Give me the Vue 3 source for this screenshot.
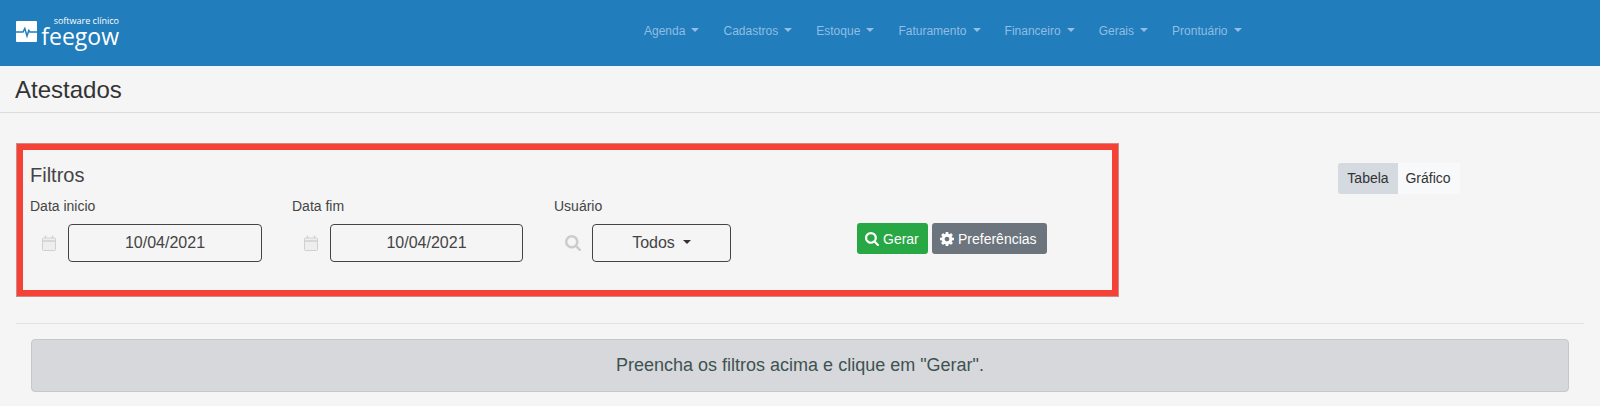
<script setup>
const menu = ["Agenda", "Cadastros", "Estoque", "Faturamento", "Financeiro", "Gerais", "Prontuário"];
</script>

<template>
  <div class="page">
    <header class="topbar">
      <a class="brand">
        <svg class="brand-icon" viewBox="0 0 21 21" width="21" height="21">
          <rect width="21" height="21" rx="1" fill="#fff" />
          <path d="M0 11h7l1.8-3.5 2.2 7.5 1.8-5.5 1 1.5H21" fill="none" stroke="#217dbb" stroke-width="1.5" />
        </svg>
        <span class="brand-text">
          <small>software clínico</small>
          <b>feegow</b>
        </span>
      </a>
      <nav class="menu">
        <a v-for="item in menu" :key="item" class="menu-link">{{ item }}<i class="caret"></i></a>
      </nav>
    </header>

    <div class="page-title">
      <h1>Atestados</h1>
    </div>

    <section class="filter-row">
      <form class="filters">
        <h2>Filtros</h2>
        <div class="fields">
          <div class="field">
            <label>Data inicio</label>
            <div class="control">
              <span class="addon">
                <svg viewBox="0 0 14 16" width="14" height="16">
                  <path d="M1.5 3h11a1 1 0 0 1 1 1v10.5a1 1 0 0 1-1 1h-11a1 1 0 0 1-1-1V4a1 1 0 0 1 1-1z" fill="#eee" stroke="#d0d0d0" />
                  <path d="M.5 6h13M3.5 .5V3M10.5 .5V3" fill="none" stroke="#d0d0d0" stroke-width="1.4" />
                </svg>
              </span>
              <div class="box box-first">10/04/2021</div>
            </div>
          </div>
          <div class="field">
            <label>Data fim</label>
            <div class="control">
              <span class="addon">
                <svg viewBox="0 0 14 16" width="14" height="16">
                  <path d="M1.5 3h11a1 1 0 0 1 1 1v10.5a1 1 0 0 1-1 1h-11a1 1 0 0 1-1-1V4a1 1 0 0 1 1-1z" fill="#eee" stroke="#d0d0d0" />
                  <path d="M.5 6h13M3.5 .5V3M10.5 .5V3" fill="none" stroke="#d0d0d0" stroke-width="1.4" />
                </svg>
              </span>
              <div class="box box-second">10/04/2021</div>
            </div>
          </div>
          <div class="field">
            <label>Usuário</label>
            <div class="control">
              <span class="addon addon-search">
                <svg viewBox="0 0 1664 1664" width="16" height="16">
                  <path fill="#ccc" d="M1152 704q0-185-131.5-316.5t-316.5-131.5-316.5 131.5-131.5 316.5 131.5 316.5 316.5 131.5 316.5-131.5 131.5-316.5zm512 832q0 52-38 90t-90 38q-54 0-90-38l-343-342q-179 124-399 124-143 0-273.5-55.5t-225-150-150-225-55.5-273.5 55.5-273.5 150-225 225-150 273.5-55.5 273.5 55.5 225 150 150 225 55.5 273.5q0 220-124 399l343 343q37 37 37 90z" />
                </svg>
              </span>
              <div class="box box-select">Todos<i class="caret caret-dark"></i></div>
            </div>
          </div>
          <div class="actions">
            <button type="button" class="btn btn-green">
              <svg viewBox="0 0 1664 1664" width="14" height="14">
                <path fill="#fff" d="M1152 704q0-185-131.5-316.5t-316.5-131.5-316.5 131.5-131.5 316.5 131.5 316.5 316.5 131.5 316.5-131.5 131.5-316.5zm512 832q0 52-38 90t-90 38q-54 0-90-38l-343-342q-179 124-399 124-143 0-273.5-55.5t-225-150-150-225-55.5-273.5 55.5-273.5 150-225 225-150 273.5-55.5 273.5 55.5 225 150 150 225 55.5 273.5q0 220-124 399l343 343q37 37 37 90z" />
              </svg>
              Gerar
            </button>
            <button type="button" class="btn btn-grey">
              <svg viewBox="128 128 1536 1536" width="14" height="14">
                <path fill="#fff" d="M1152 896q0-106-75-181t-181-75-181 75-75 181 75 181 181 75 181-75 75-181zm512-109v222q0 12-8 23t-20 13l-185 28q-19 54-39 91 35 50 107 138 10 12 10 25t-9 23q-27 37-99 108t-94 71q-12 0-26-9l-138-108q-44 23-91 38-16 136-29 186-7 28-36 28h-222q-14 0-24.5-8.5t-11.5-21.5l-28-184q-49-16-90-37l-141 107q-10 9-25 9-14 0-25-11-126-114-165-168-7-10-7-23 0-12 8-23 15-21 51-66.5t54-70.5q-27-50-41-99l-183-27q-13-2-21-12.5t-8-23.5v-222q0-12 8-23t19-13l186-28q14-46 39-92-40-57-107-138-10-12-10-24 0-10 9-23 26-36 98.5-107.5t94.5-71.5q13 0 26 10l138 107q44-23 91-38 16-136 29-186 7-28 36-28h222q14 0 24.5 8.5t11.5 21.5l28 184q49 16 90 37l142-107q9-9 24-9 13 0 25 10 129 119 165 170 7 8 7 22 0 12-8 23-15 21-51 66.5t-54 70.5q26 50 41 98l183 28q13 2 21 12.5t8 23.5z" />
              </svg>
              Preferências
            </button>
          </div>
        </div>
      </form>

      <div class="toggle">
        <span class="toggle-item active">Tabela</span>
        <span class="toggle-item">Gráfico</span>
      </div>
    </section>

    <hr class="divider" />

    <div class="alert">Preencha os filtros acima e clique em "Gerar".</div>
  </div>
</template>

<style>
html,
body {
  margin: 0;
  background: #f5f5f5;
}
</style>

<style scoped>
.page {
  width: 1600px;
  height: 406px;
  overflow: hidden;
  background: #f5f5f5;
  color: #333;
  font-family: "Liberation Sans", Arial, sans-serif;
  font-size: 14px;
}

.topbar {
  height: 66px;
  box-sizing: border-box;
  background: #217dbb;
  display: flex;
  align-items: flex-start;
  padding-left: 16px;
}

.brand {
  display: flex;
  align-items: flex-start;
  width: 616px;
  padding-top: 21px;
}

.brand-icon {
  flex: none;
}

.brand-text {
  display: flex;
  flex-direction: column;
  align-items: flex-end;
  width: 79px;
  margin-left: 3px;
  margin-top: -5px;
  color: #fff;
  font-family: "Open Sans", sans-serif;
}

.brand-text small {
  font-size: 9px;
  line-height: 9px;
  font-weight: 400;
}

.brand-text b {
  font-weight: 400;
  font-size: 23px;
  line-height: 22px;
}

.menu {
  display: flex;
  padding-top: 24px;
}

.menu-link {
  display: flex;
  align-items: center;
  padding: 0 12px;
  font-size: 12px;
  line-height: 14px;
  color: #90bee4;
}

.caret {
  display: block;
  width: 0;
  height: 0;
  margin-left: 6.1px;
  margin-top: -2px;
  border-top: 4px solid currentColor;
  border-left: 4px solid transparent;
  border-right: 4px solid transparent;
}

.page-title {
  height: 46px;
  box-sizing: content-box;
  border-bottom: 1px solid #dcdcdc;
  padding-left: 15px;
}

.page-title h1 {
  margin: 0;
  font-size: 24px;
  font-weight: 400;
  line-height: 47px;
  height: 46px;
}

.filter-row {
  display: flex;
  align-items: flex-start;
  padding: 30px 0 0 16px;
}

.filters {
  width: 1103px;
  height: 154px;
  box-sizing: border-box;
  border: 7px solid #f44336;
  outline: 1px solid #d08a85;
  outline-offset: -1px;
  padding: 12px 0 0 7px;
}

.filters h2 {
  margin: 0 0 7px;
  font-size: 20px;
  font-weight: 400;
  line-height: 26px;
  color: #444;
}

.fields {
  display: grid;
  grid-template-columns: repeat(3, 262px) auto;
}

.field label {
  display: block;
  height: 27px;
  line-height: 18px;
  font-size: 14px;
  margin-top: 2px;
  color: #444;
}

.control {
  display: flex;
  align-items: center;
}

.addon {
  width: 38px;
  flex: none;
  box-sizing: border-box;
  padding-left: 12px;
  display: flex;
}

.addon-search {
  padding-left: 11px;
}

.box {
  height: 38px;
  box-sizing: border-box;
  border: 1px solid #444;
  border-radius: 4px;
  display: flex;
  align-items: center;
  justify-content: center;
  font-size: 16px;
  color: #444;
}

.box-first {
  width: 194px;
}

.box-second {
  width: 193px;
}

.box-select {
  width: 139px;
}

.caret-dark {
  color: #333;
  margin-left: 8px;
  border-left-width: 4.5px;
  border-right-width: 4.5px;
}

.actions {
  display: flex;
  gap: 4px;
  padding: 28px 0 0 41px;
}

.btn {
  height: 31px;
  box-sizing: border-box;
  border: 0;
  border-radius: 3px;
  padding: 0 8px;
  display: flex;
  align-items: center;
  gap: 4px;
  color: #fff;
  font-family: inherit;
  font-size: 14px;
}

.btn-green {
  width: 71px;
  background: #28a745;
}

.btn-grey {
  width: 115px;
  background: #6c757d;
}

.toggle {
  display: flex;
  margin: 20px 0 0 219px;
  height: 31px;
  line-height: 31px;
}

.toggle-item {
  width: 60px;
  text-align: center;
  background: #f8f9fa;
  color: #333;
}

.toggle-item.active {
  background: #d5dae1;
  border-radius: 3px 0 0 3px;
}

.toggle-item:last-child {
  width: 60px;
  padding-right: 2px;
}

.divider {
  margin: 26px 16px 15px;
  border: 0;
  border-top: 1px solid #e2e2e2;
}

.alert {
  margin: 0 31px;
  height: 53px;
  box-sizing: border-box;
  border: 1px solid #c6c8ca;
  border-radius: 4px;
  background: #d6d8db;
  color: #3e5252;
  font-size: 18px;
  line-height: 51px;
  text-align: center;
}
</style>
